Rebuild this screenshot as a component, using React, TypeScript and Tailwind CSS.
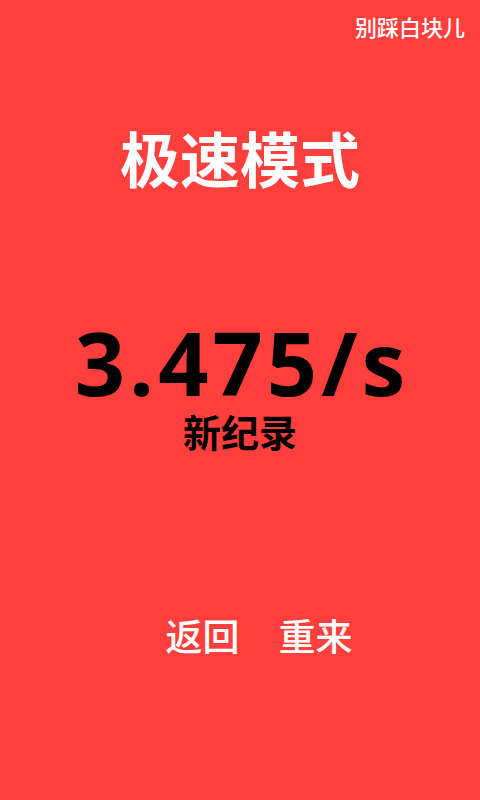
export default function App() {
  return (
    <div
      className="w-[480px] h-[800px] bg-[#fe3f3c] flex flex-col text-white"
      style={{ fontFamily: '"Open Sans", "Noto Sans CJK SC", sans-serif' }}
    >
      <div className="flex justify-end pr-[15px] pt-[12px]">
        <span className="text-[22px] font-medium leading-[30px]">别踩白块儿</span>
      </div>

      <h1 className="mt-[78px] text-center text-[60px] font-bold leading-[80px]">极速模式</h1>

      <div className="mt-[122px] flex flex-col items-center text-black">
        <div className="text-[88px] font-bold leading-[80px] tracking-[4px] pl-[4px]">3.475/s</div>
        <div className="text-[38px] font-bold leading-[44px] mt-[8px]">新纪录</div>
      </div>

      <div className="mt-[158px] flex justify-center gap-[39px] pl-[38px]">
        <button className="text-[37px] font-medium leading-[50px]">返回</button>
        <button className="text-[37px] font-medium leading-[50px]">重来</button>
      </div>
    </div>
  );
}
